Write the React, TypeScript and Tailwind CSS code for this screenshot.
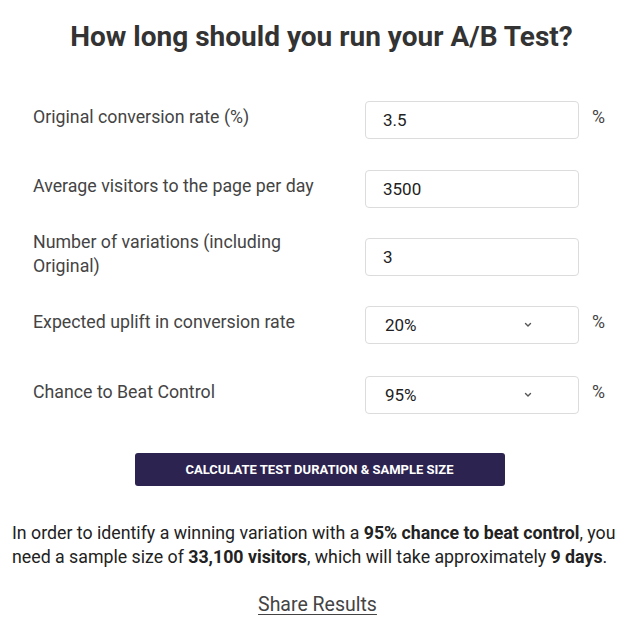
import { useState } from 'react'

const font = { fontFamily: 'Roboto, "Liberation Sans", sans-serif' }

function Chevron() {
  return (
    <svg className="h-[6px] w-[8px]" viewBox="0 0 8 6" fill="none" stroke="#555" strokeWidth={1.4}>
      <path d="M1.5 1.5 4 4l2.5-2.5" strokeLinecap="round" strokeLinejoin="round" />
    </svg>
  )
}

function Row({ label, children, unit, className = '' }: {
  label: string
  children: React.ReactNode
  unit?: boolean
  className?: string
}) {
  return (
    <div className={`flex h-[38px] items-center pl-[33px] ${className}`}>
      <label className="-mt-[6px] w-[332px] pr-[40px]">{label}</label>
      {children}
      {unit && <span className="-mt-[6px] ml-[13px]">%</span>}
    </div>
  )
}

export default function App() {
  const [rate, setRate] = useState('3.5')
  const [visitors, setVisitors] = useState('3500')
  const [variations, setVariations] = useState('3')

  const inputCls =
    'h-[38px] w-[214px] rounded border border-[#dcdcdc] bg-white px-[17px] text-[17px] text-[#222] outline-none'
  const selectCls =
    'flex h-[38px] w-[214px] items-center justify-between rounded border border-[#dcdcdc] bg-white pl-[19px] pr-[46px] text-[17px] text-[#222]'

  return (
    <div className="min-h-[630px] w-[643px] bg-white" style={font}>
      <h1 className="pt-[19px] text-center text-[28px] font-bold leading-[36px] text-[#333]">
        How long should you run your A/B Test?
      </h1>

      <div className="text-[17.75px] leading-[24px] text-[#444]">
        <Row label="Original conversion rate (%)" unit className="mt-[46px]">
          <input className={inputCls} value={rate} onChange={(e) => setRate(e.target.value)} />
        </Row>
        <Row label="Average visitors to the page per day" className="mt-[31px]">
          <input className={inputCls} value={visitors} onChange={(e) => setVisitors(e.target.value)} />
        </Row>
        <Row label="Number of variations (including Original)" className="mt-[30px]">
          <input className={inputCls} value={variations} onChange={(e) => setVariations(e.target.value)} />
        </Row>
        <Row label="Expected uplift in conversion rate" unit className="mt-[30px]">
          <div className={selectCls}>
            <span>20%</span>
            <Chevron />
          </div>
        </Row>
        <Row label="Chance to Beat Control" unit className="mt-[32px]">
          <div className={selectCls}>
            <span>95%</span>
            <Chevron />
          </div>
        </Row>
      </div>

      <div className="mt-[39px] flex justify-center pr-[4px]">
        <button className="h-[33px] w-[370px] rounded-[3px] bg-[#2d2350] text-[13px] font-bold uppercase text-white">
          Calculate test duration &amp; sample size
        </button>
      </div>

      <p className="mt-[35px] px-[12px] text-[17.75px] leading-[24px] text-[#222]">
        In order to identify a winning variation with a <b>95% chance to beat control</b>, you need a sample size of{' '}
        <b>33,100 visitors</b>, which will take approximately <b>9 days</b>.
      </p>

      <div className="mt-[24px] text-center">
        <a href="#" className="pr-[8px] text-[19.5px] leading-[24px] text-[#444] underline underline-offset-[3px]">
          Share Results
        </a>
      </div>
    </div>
  )
}
